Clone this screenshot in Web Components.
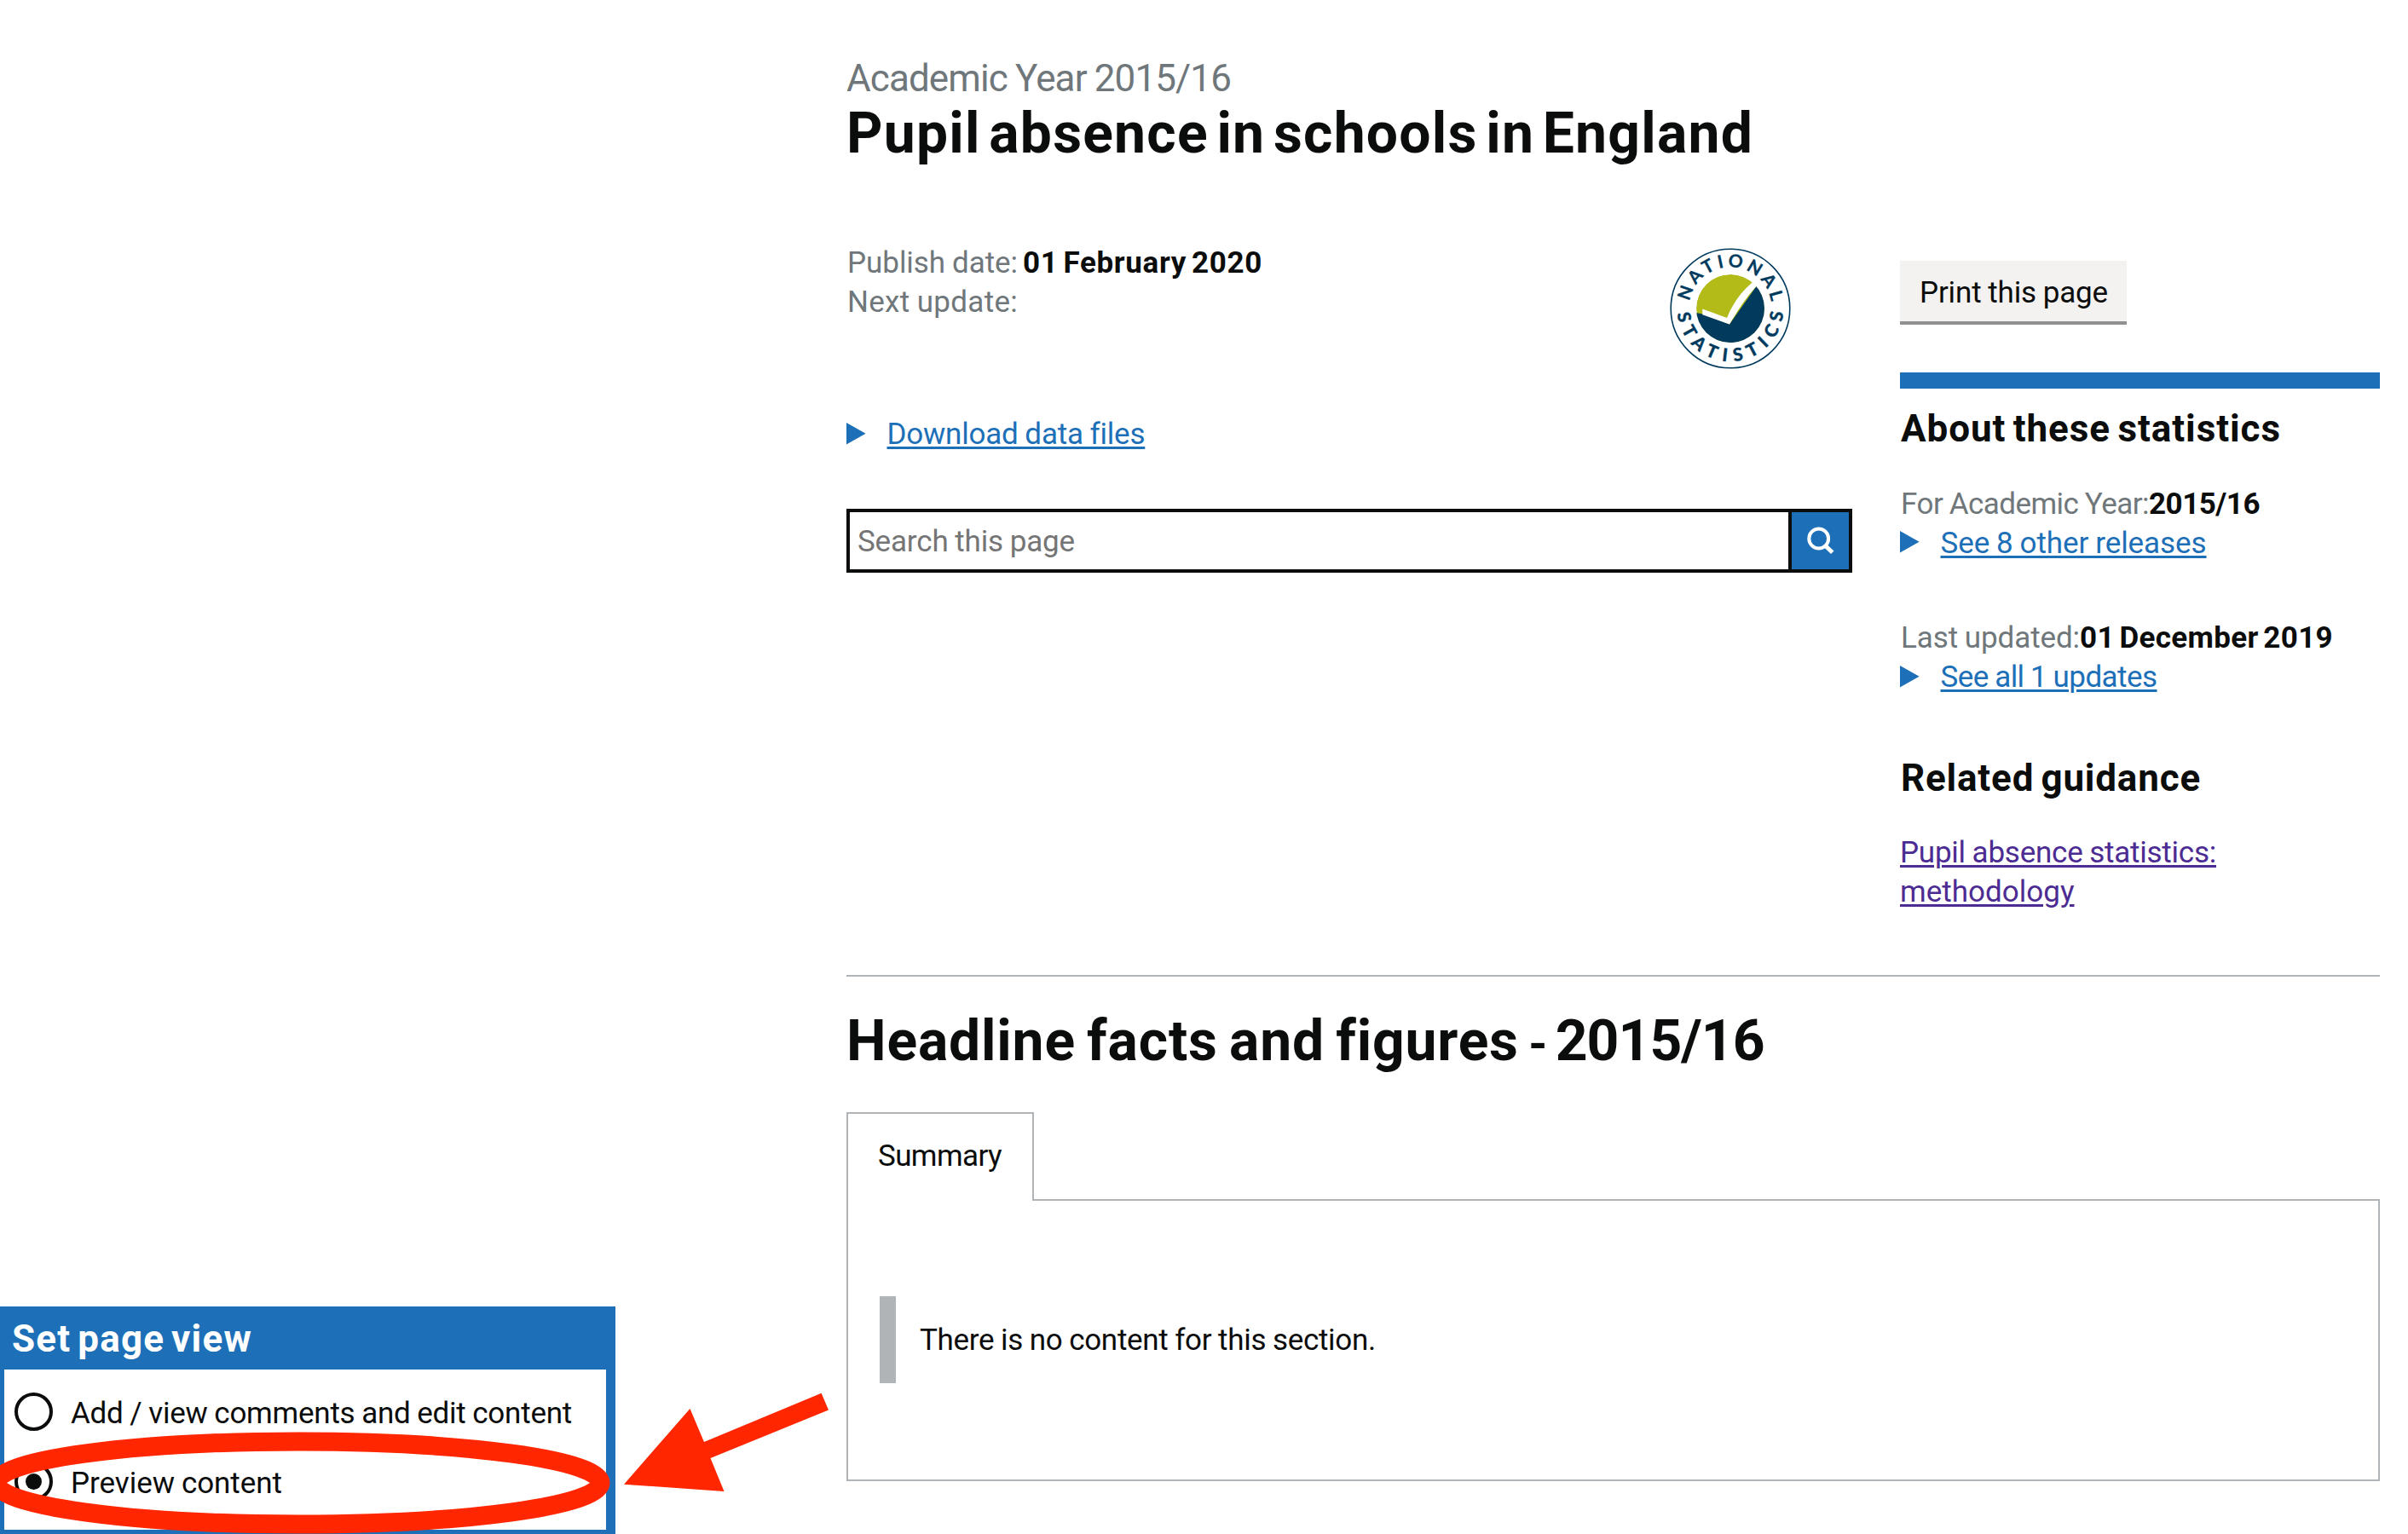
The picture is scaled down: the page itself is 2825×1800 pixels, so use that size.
<!DOCTYPE html>
<html lang="en">
<head>
<meta charset="utf-8">
<title>Pupil absence in schools in England</title>
<style>
  html, body { margin: 0; background: #fff; }
  body { width: 2825px; height: 1800px; overflow: hidden; position: relative;
    font-family: Roboto, "Open Sans", sans-serif; font-size: 35px; line-height: 46px; color: #0b0c0c; }
</style>
</head>
<body>
<release-page></release-page>
<script>
const define = (name, html, setup) => {
  const tpl = document.createElement('template');
  tpl.innerHTML = html;
  customElements.define(name, class extends HTMLElement {
    connectedCallback() {
      if (this.shadowRoot) return;
      this.attachShadow({ mode: 'open' }).append(tpl.content.cloneNode(true));
      if (setup) setup(this);
    }
  });
};

/* A run of text tracked so that it sets to the measure given in "w". */
define('text-run', `<style>
  :host { display: inline-block; white-space: nowrap; word-spacing: var(--word-gap, -.02em); }
  :host([link]) span { text-decoration: underline; text-decoration-thickness: 3px; text-underline-offset: 3px; }
</style><span><slot></slot></span>`, el => {
  const w = parseFloat(el.getAttribute('w'));
  const natural = el.shadowRoot.querySelector('span').getBoundingClientRect().width;
  const count = el.textContent.length;
  if (w && natural) el.style.letterSpacing = ((w - natural) / count).toFixed(3) + 'px';
});

define('disclosure-link', `<style>
  :host { display: flex; align-items: center; height: 46px; color: #1d70b8; }
  svg { width: 23px; height: 26px; margin-right: 24.5px; margin-top: -1px; flex: none; }
  div { padding-top: 2px; }
</style><svg viewBox="0 0 23 26"><path d="M0 0L22.6 12.8L0 25.6z" fill="#1d70b8"/></svg><div><slot></slot></div>`);

define('national-statistics', `<style>
  :host { display: block; width: 144px; height: 144px; }
  svg { display: block; } text { font: 700 21px Lato, sans-serif; fill: #003a5d; stroke: #003a5d; stroke-width: .3; }
  .lower { font-weight: 900; }
</style><svg width="144" height="144" viewBox="-72 -72 144 144">
  <defs>
    <path id="up" d="M-45.6 16.8A48.6 48.6 0 1 1 45.6 16.8"/>
    <path id="down" d="M-62.4 3.2A62.5 62.5 0 0 0 62.4 3.2"/>
    <clipPath id="disc"><circle r="40"/></clipPath>
  </defs>
  <circle r="69.8" fill="#fff" stroke="#003a5d" stroke-width="1.6"/>
  <g clip-path="url(#disc)">
    <circle r="40" fill="#b3bb18"/>
    <path d="M-42 4.6L-32.7 6.5L-1 18.6L30.4 -26L45 -40V45H-45z" fill="#003a5d"/>
    <path d="M-32.7 .6L-4 11Q6 -14 25.7 -30.4L31 -35L36 -31L30.4 -26Q14 -8 -1 18.6L-32.7 7.3z" fill="#fff"/>
  </g>
  <text><textPath href="#up" startOffset="25.5" textLength="136">NATIONAL</textPath></text>
  <text class="lower"><textPath href="#down" startOffset="2.5" textLength="185">STATISTICS</textPath></text>
</svg>`);

define('search-box', `<style>
  :host { display: flex; box-sizing: border-box; width: 1180px; height: 75px; border: 4px solid #0b0c0c; }
  .field { flex: 1; padding: 11.5px 0 0 9px; color: #757575; }
  .go { width: 67px; border-left: 4px solid #0b0c0c; background: #1d70b8; }
  svg { display: block; }
</style><div class="field"><text-run w="255">Search this page</text-run></div>
<div class="go"><svg width="67" height="67" viewBox="0 0 67 67" fill="none" stroke="#fff" stroke-width="4"><circle cx="31.7" cy="31" r="11.4"/><path d="M39.8 39.8L47.8 47.3" stroke-width="5"/></svg></div>`);

define('release-meta', `<style>
  :host { display: flex; justify-content: space-between; height: 201px; color: #6f777b; }
  .lines { padding: 1px 0 0 1px; }
  .line { height: 46px; } b { color: #0b0c0c; margin-left: 6px; --word-gap: -.1em; }
  national-statistics { margin: 5px 70.7px 0 0; }
</style><div class="lines"><div class="line"><text-run w="200">Publish date:</text-run><b><text-run w="281">01 February 2020</text-run></b></div>
<div class="line"><text-run w="200">Next update:</text-run></div></div><national-statistics></national-statistics>`);

define('print-button', `<style>
  :host { display: block; width: 266px; height: 71px; border-bottom: 4px solid #929191; background: #f3f2f1; box-sizing: content-box; }
  div { padding: 15px 0 0 23px; }
</style><div><text-run w="221">Print this page</text-run></div>`);

define('side-heading', `<style>
  :host { display: block; font-size: 44px; line-height: 56px; font-weight: 700; --word-gap: -.08em; }
</style><slot></slot>`);

define('about-statistics', `<style>
  :host { display: block; width: 563px; padding-top: 21px; }
  .bar { height: 19px; background: #1d70b8; margin: 56px 0 19px; }
  side-heading, .line { padding-left: 1px; }
  .line { height: 46px; color: #6f777b; white-space: nowrap; } b { color: #0b0c0c; --word-gap: -.1em; }
  .facts { margin-top: 37.5px; } .updates { margin-top: 65.5px; }
  .related { margin-top: 68px; } .links { margin-top: 37px; color: #4c2c92; }
  .links div { height: 46px; }
  disclosure-link { margin-top: -1px; } .updates .line { padding-top: 1px; height: 46px; }
</style><print-button></print-button>
<div class="bar"></div>
<side-heading><text-run w="446">About these statistics</text-run></side-heading>
<div class="facts"><div class="line"><text-run w="291">For Academic Year:</text-run><b><text-run w="130">2015/16</text-run></b></div>
<disclosure-link><text-run link w="312">See 8 other releases</text-run></disclosure-link></div>
<div class="updates"><div class="line"><text-run w="210">Last updated:</text-run><b><text-run w="297">01 December 2019</text-run></b></div>
<disclosure-link><text-run link w="254">See all 1 updates</text-run></disclosure-link></div>
<side-heading class="related"><text-run w="352">Related guidance</text-run></side-heading>
<div class="links"><div><text-run link w="371">Pupil absence statistics:</text-run></div><div><text-run link w="204.5">methodology</text-run></div></div>`);

define('summary-tabs', `<style>
  :host { display: block; margin-top: 49px; }
  .tab { position: relative; box-sizing: border-box; width: 220px; height: 104px; padding: 26.5px 0 0 35px; border: 2px solid #b1b4b6; border-bottom: 0; background: #fff; }
  .panel { box-sizing: border-box; height: 331px; margin-top: -2px; border: 2px solid #b1b4b6; padding: 112px 0 0 37px; }
  .inset { border-left: 19px solid #b1b4b6; padding: 29px 28px 27px; }
</style><div class="tab"><text-run w="145">Summary</text-run></div>
<div class="panel"><div class="inset"><text-run w="535">There is no content for this section.</text-run></div></div>`);

define('radio-option', `<style>
  :host { display: flex; align-items: center; height: 46px; }
  i { box-sizing: border-box; width: 45px; height: 45px; margin: -4px 21px 0 12px; border: 4px solid #0b0c0c; border-radius: 50%; display: grid; place-items: center; }
  :host([checked]) i::after { content: ""; width: 19px; height: 19px; border-radius: 50%; background: #0b0c0c; }
</style><i></i><slot></slot>`);

define('page-view', `<style>
  :host { display: block; box-sizing: border-box; width: 722px; height: 267px; border: solid #1d70b8; border-width: 0 11px 5px 5px; background: #fff; }
  header { box-sizing: border-box; height: 74px; padding: 1px 0 0 9px; margin-bottom: 28.5px; background: #1d70b8; color: #fff; font: 700 44px/74px Roboto, sans-serif; --word-gap: -.1em; }
  radio-option + radio-option { margin-top: 36px; }
</style><header><text-run w="282">Set page view</text-run></header>
<radio-option><text-run w="588">Add / view comments and edit content</text-run></radio-option>
<radio-option checked><text-run w="248">Preview content</text-run></radio-option>`);

/* Highlight ring and arrow laid over the page. */
define('red-callout', `<style>
  :host { position: absolute; left: 0; bottom: 0; width: 993px; height: 180px; } svg { display: block; }
</style><svg width="993" height="180" viewBox="0 1620 993 180">
<ellipse cx="350" cy="1740" rx="354.5" ry="48.5" fill="none" stroke="#ff2600" stroke-width="22"/>
<path d="M732 1741.7L809.5 1653L826 1692L963.6 1634.7L972 1654.5L833.5 1711L849.5 1750z" fill="#ff2600"/></svg>`);

define('release-page', `<style>
  :host { display: grid; grid-template-columns: 993px 1799px; height: 1800px; }
  page-view { align-self: end; }
  main { padding-top: 64px; }
  .caption { font-size: 44px; line-height: 56px; height: 56px; color: #6f777b; }
  h1, h2 { margin: 0; font-size: 66px; line-height: 70px; height: 70px; font-weight: 700; --word-gap: -.12em; }
  h1 { padding-top: 1px; } h1 { margin-top: 1px; } h2 { margin-top: 41px; white-space: nowrap; word-spacing: -5px; }
  h2 { --word-gap: -.06em; }
  .dash { font-size: 56px; }
  .columns { display: grid; grid-template-columns: 1180px 563px; column-gap: 56px; margin-top: 93px; height: 859px; border-bottom: 2px solid #b1b4b6; }
  search-box { margin-top: 65px; }
  summary-tabs { margin-top: 48px; }
</style><page-view></page-view>
<main>
  <div class="caption"><text-run w="451">Academic Year 2015/16</text-run></div>
  <h1><text-run w="1064">Pupil absence in schools in England</text-run></h1>
  <div class="columns">
    <section><release-meta></release-meta>
      <disclosure-link><text-run link w="301.5">Download data files</text-run></disclosure-link>
      <search-box></search-box></section>
    <about-statistics></about-statistics>
  </div>
  <h2><text-run w="788">Headline facts and figures</text-run> <text-run class="dash" w="20">-</text-run> <text-run w="245">2015/16</text-run></h2>
  <summary-tabs></summary-tabs>
</main>
<red-callout></red-callout>`);
</script>
</body>
</html>
